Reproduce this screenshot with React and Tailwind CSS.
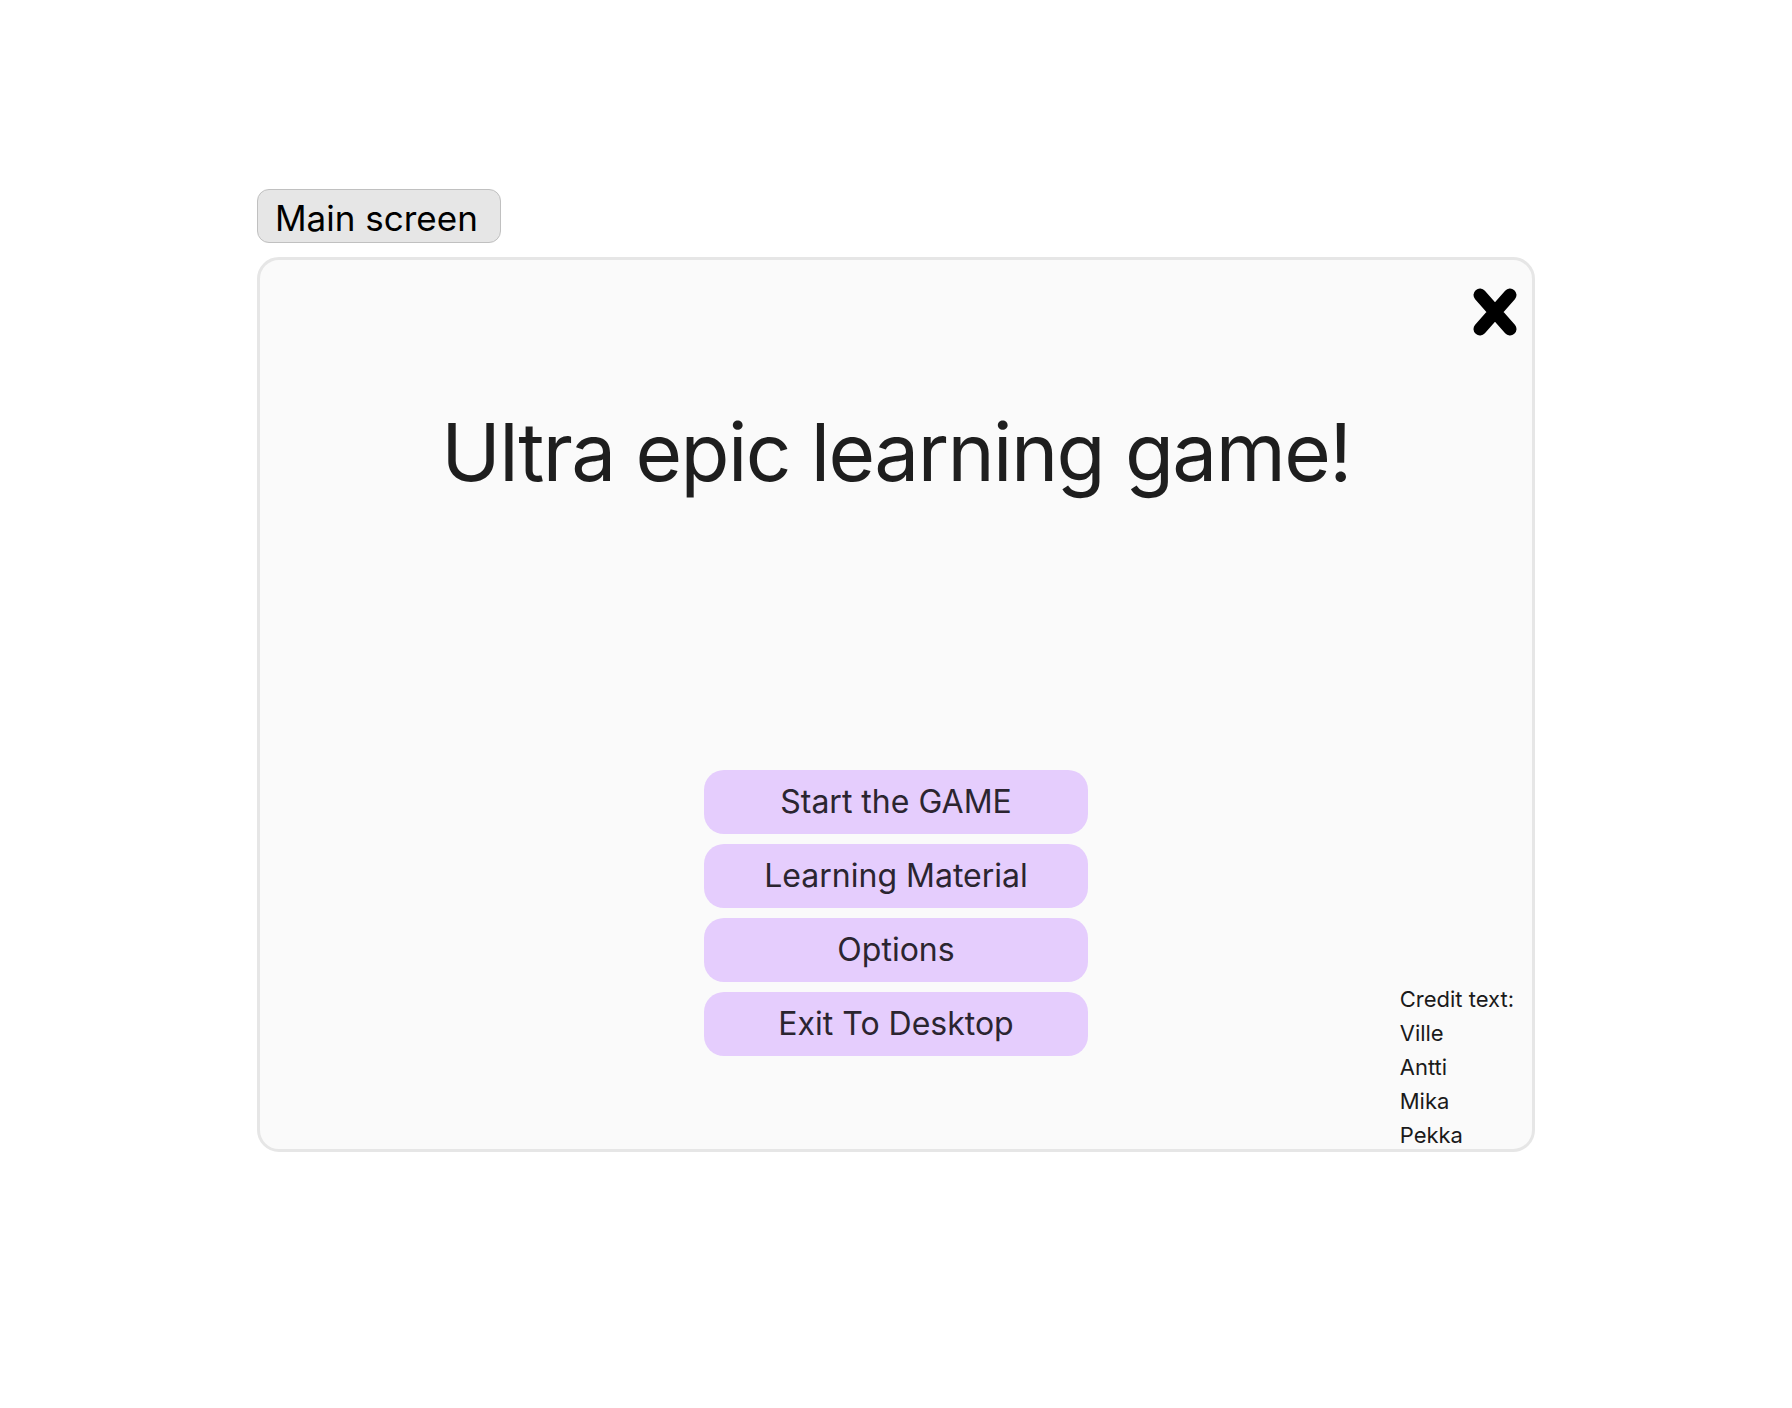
import React from 'react';

// Menu entries of the main screen
const menuItems = ['Start the GAME', 'Learning Material', 'Options', 'Exit To Desktop'];

// Names shown in the credit corner
const credits = ['Ville', 'Antti', 'Mika', 'Pekka'];

const CloseIcon = () => (
  <svg width="46" height="50" viewBox="0 0 46 50" fill="none">
    <path d="M8 8 L38 42 M38 8 L8 42" stroke="#000" strokeWidth="13" strokeLinecap="round" />
  </svg>
);

export default function App() {
  return (
    <div className="min-h-screen bg-white pt-[189px] px-[257px] font-['Inter',sans-serif]">
      {/* Tab label */}
      <div className="inline-flex h-[54px] items-center rounded-[12px] border border-[#c0c0c0] bg-[#e6e6e6] pt-[4px] pl-[17px] pr-[22px] text-[35px] text-black">
        Main screen
      </div>

      {/* Main panel */}
      <div className="mt-[14px] flex h-[895px] flex-col rounded-[22px] border-[3px] border-[#e6e6e6] bg-[#fafafa]">
        <div className="flex justify-end pt-[27px] pr-[14px]">
          <button type="button" className="block">
            <CloseIcon />
          </button>
        </div>

        <h1 className="mt-[75px] text-center text-[80px] leading-none tracking-[-0.02em] text-[#1e1e1e]">
          Ultra epic learning game!
        </h1>

        <div className="mt-[278px] grid flex-1 grid-cols-[1fr_auto_1fr]">
          <div />
          <div className="flex flex-col gap-[10px] self-start">
            {menuItems.map(item => (
              <button
                key={item}
                type="button"
                className="h-[64px] w-[384px] rounded-[20px] bg-[#e5cdfd] text-[32px] text-[#2b2530]"
              >
                {item}
              </button>
            ))}
          </div>
          <div className="mb-[-3px] self-end justify-self-end pr-[18px] text-[22px] leading-[34px] text-[#1a1a1a]">
            <div>Credit text:</div>
            {credits.map(name => (
              <div key={name}>{name}</div>
            ))}
          </div>
        </div>
      </div>
    </div>
  );
}
